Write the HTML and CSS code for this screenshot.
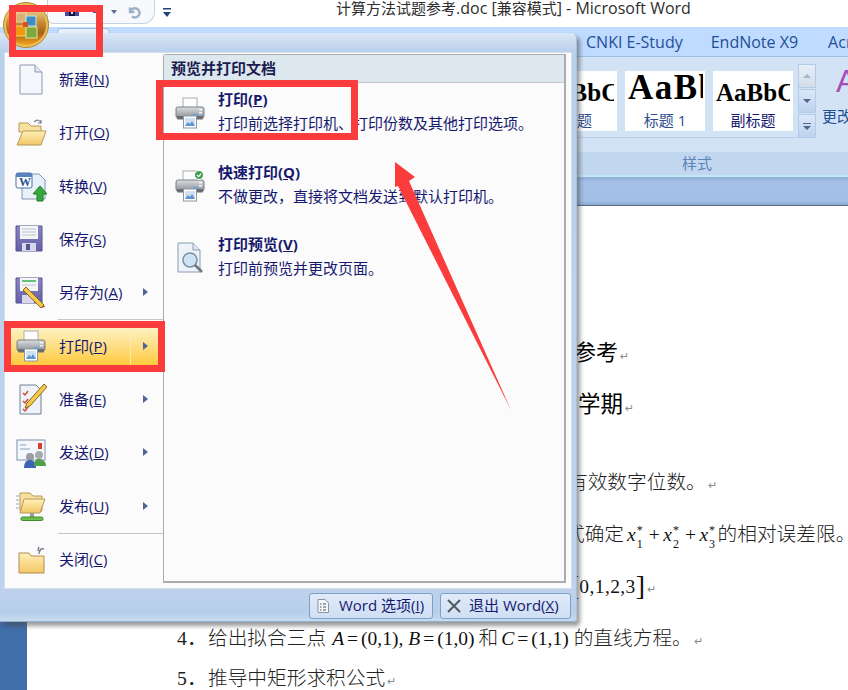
FILE: index.html
```html
<!DOCTYPE html>
<html lang="zh-CN">
<head>
    <meta charset="UTF-8">
    <meta name="viewport" content="width=device-width, initial-scale=1.0">
    <title>计算方法试题参考.doc - Microsoft Word</title>
    <link rel="stylesheet" href="styles.css">
</head>
<body>
    <svg class="defs" width="0" height="0">
        <defs>
            <linearGradient id="folder-g" x1="0" y1="0" x2="0" y2="1"><stop offset="0" stop-color="#fff0b8"/><stop offset="1" stop-color="#f3c766"/></linearGradient>
            <linearGradient id="floppy-g" x1="0" y1="0" x2="0" y2="1"><stop offset="0" stop-color="#8a86c4"/><stop offset="1" stop-color="#6460a8"/></linearGradient>
            <linearGradient id="body-g" x1="0" y1="0" x2="0" y2="1"><stop offset="0" stop-color="#dcdee0"/><stop offset="1" stop-color="#8b8f94"/></linearGradient>
            <linearGradient id="orb-g" x1="0" y1="0" x2="0" y2="1"><stop offset="0" stop-color="#f6e2a8"/><stop offset=".42" stop-color="#c98f38"/><stop offset=".7" stop-color="#a8601a"/><stop offset="1" stop-color="#f2a41c"/></linearGradient>
            <symbol id="i-printer" viewBox="0 0 32 32">
                <rect x="9" y="1" width="14" height="10" fill="#fdfdfd" stroke="#a9adb2"/>
                <rect x="2" y="10" width="28" height="11" rx="2" fill="url(#body-g)" stroke="#7b7f84"/>
                <rect x="3" y="19" width="26" height="3.5" rx="1" fill="#6a6e73"/>
                <rect x="25" y="12" width="3" height="1.5" fill="#f2f2f2"/>
                <rect x="25" y="15" width="3" height="1.5" fill="#f2f2f2"/>
                <rect x="19" y="17" width="5" height="1.5" fill="#58a7e8"/>
                <rect x="9.5" y="19" width="13" height="12" fill="#fff" stroke="#8e979f"/>
                <rect x="11" y="21" width="10" height="8" fill="#cfe2f4"/>
                <path d="M11 29l3-4 2 2 2-3 3 5z" fill="#5e95d0"/>
            </symbol>
        </defs>
    </svg>

    <div class="app">
        <header class="titlebar">
            <div class="qat">
                <svg class="qat-save" width="14" height="9" viewBox="0 0 14 9"><rect width="14" height="9" fill="#4b4aa8"/><rect x="4" y="3" width="6" height="6" fill="#16163a"/><rect x="6" y="4" width="2" height="3" fill="#dfe3f5"/></svg>
                <span class="qat-mark"></span>
                <span class="qat-drop"></span>
                <svg class="qat-undo" width="14" height="14" viewBox="0 0 14 14"><path d="M3 2.5v4.5h4.5M3.5 6.5a4.6 4.6 0 1 1 1.4 4.8" fill="none" stroke="#9db0c8" stroke-width="2.4"/></svg>
            </div>
            <svg class="qat-custom" width="8" height="12" viewBox="0 0 8 12"><rect y="1" width="8" height="1.5" fill="#26427a"/><path d="M0 5h8l-4 5z" fill="#26427a"/></svg>
            <h1 class="doc-title"><span class="cjk">计算方法试题参考</span>.doc [<span class="cjk">兼容模式</span>] - Microsoft Word</h1>
        </header>

        <nav class="tabs">
            <span class="home-tab"></span>
            <span class="tab">CNKI E-Study</span>
            <span class="tab">EndNote X9</span>
            <span class="tab tab-cut">Acr</span>
        </nav>

        <section class="ribbon">
            <div class="styles-group">
                <div class="gallery">
                    <div class="style-cell">
                        <span class="sample sample-sub">AaBbC</span>
                        <span class="cell-name">标题</span>
                    </div>
                    <div class="style-cell">
                        <span class="sample sample-h1">AaBb</span>
                        <span class="cell-name">标题 1</span>
                    </div>
                    <div class="style-cell">
                        <span class="sample sample-sub">AaBbC</span>
                        <span class="cell-name cell-name-dark">副标题</span>
                    </div>
                </div>
                <div class="scroller">
                    <span class="scroll-btn scroll-up"><i class="tri-up"></i></span>
                    <span class="scroll-btn"><i class="tri-down"></i></span>
                    <span class="scroll-btn"><i class="bar"></i><i class="tri-down"></i></span>
                </div>
                <div class="change-styles">
                    <span class="big-a">A</span>
                    <span class="change-label">更改</span>
                </div>
            </div>
            <div class="group-label">样式</div>
        </section>

        <div class="ruler-band"></div>

        <main class="workspace">
            <div class="page">
                <p class="line head-a">参考<span class="mark">↵</span></p>
                <p class="line head-b">学期<span class="mark">↵</span></p>
                <p class="line q1">有效数字位数。<span class="mark">↵</span></p>
                <p class="line q2">式确定<span class="math gap-x"><i>x</i><span class="ss"><sup>*</sup><sub>1</sub></span><span class="plus">+</span><i>x</i><span class="ss"><sup>*</sup><sub>2</sub></span><span class="plus">+</span><i>x</i><span class="ss"><sup>*</sup><sub>3</sub></span></span>的相对误差限。</p>
                <p class="line q3"><span class="math digits"><span class="bracket">[</span>0,1,2,3<span class="bracket">]</span></span><span class="mark">↵</span></p>
                <p class="line q4"><span class="num">4．</span>给出拟合三点<span class="math gap-l"><i>A</i><span class="eq">=</span>(0,1),<i class="after-comma">B</i><span class="eq">=</span>(1,0)</span><span class="gap-he">和</span><span class="math gap-c"><i>C</i><span class="eq">=</span>(1,1)</span><span class="gap-de">的直线方程。</span><span class="mark">↵</span></p>
                <p class="line q5"><span class="num">5．</span>推导中矩形求积公式<span class="mark">↵</span></p>
            </div>
        </main>

        <!-- office menu, sits over the ribbon and the page -->
        <div class="office-menu">
            <div class="menu-body">
                <ul class="menu-list">
                    <li class="menu-item">
                        <svg class="ic" viewBox="0 0 32 32"><path d="M5 1h15l7 7v22H5z" fill="#f4f7fb" stroke="#8d9cb2"/><path d="M20 1v7h7" fill="#dfe7f1" stroke="#8d9cb2"/></svg>
                        <span>新建(<u>N</u>)</span>
                    </li>
                    <li class="menu-item">
                        <svg class="ic" viewBox="0 0 32 32"><path d="M4 6h9l3 3h10v6H4z" fill="#f7dfa0" stroke="#b8995a"/><path d="M8 14h23l-5 14H2z" fill="url(#folder-g)" stroke="#b8995a"/><path d="M19 5c3-3 6-2 7 1M26 3v3h-3" fill="none" stroke="#7a828c" stroke-width="1.2"/></svg>
                        <span>打开(<u>O</u>)</span>
                    </li>
                    <li class="menu-item">
                        <svg class="ic" viewBox="0 0 32 32"><path d="M7 4h17l6 6v19H7z" fill="#e8f0f9" stroke="#7f96b4"/><rect x="1" y="3" width="16" height="15" rx="2" fill="#fff" stroke="#4a6fa8"/><rect x="1" y="3" width="16" height="4" fill="#5b80bd"/><text class="ic-w" x="4" y="16">W</text><path d="M25 16l7 8h-4v7h-6v-7h-4z" fill="#38a83a" stroke="#1f7a26"/></svg>
                        <span>转换(<u>V</u>)</span>
                    </li>
                    <li class="menu-item">
                        <svg class="ic" viewBox="0 0 32 32"><path d="M1 3h26v25H1z" fill="url(#floppy-g)" stroke="#55528f"/><rect x="5" y="3" width="18" height="13" fill="#f4f5f8"/><path d="M7 6h14M7 9h14M7 12h14" stroke="#c0c3cc"/><rect x="7" y="20" width="14" height="8" fill="#d8d8ea"/><rect x="11" y="21" width="4" height="6" fill="#55528f"/></svg>
                        <span>保存(<u>S</u>)</span>
                    </li>
                    <li class="menu-item item-sep has-sub">
                        <svg class="ic" viewBox="0 0 32 32"><path d="M1 1h26v25H1z" fill="url(#floppy-g)" stroke="#55528f"/><rect x="5" y="1" width="18" height="13" fill="#f4f5f8"/><path d="M7 4h14" stroke="#36b04a" stroke-width="1.5"/><path d="M7 8h14" stroke="#c0c3cc"/><rect x="7" y="18" width="12" height="8" fill="#d8d8ea"/><path d="M11 10l18 18-3 3L8 13z" fill="#f5c84a" stroke="#8a6a22"/><path d="M26 31l3-3 1 2z" fill="#c04a3a"/></svg>
                        <span>另存为(<u>A</u>)</span>
                        <i class="sub-arrow"></i>
                    </li>
                    <li class="menu-item is-active has-sub">
                        <svg class="ic" viewBox="0 0 32 32"><use href="#i-printer"/></svg>
                        <span>打印(<u>P</u>)</span>
                        <i class="sub-arrow"></i>
                    </li>
                    <li class="menu-item has-sub">
                        <svg class="ic" viewBox="0 0 32 32"><path d="M5 2h16l5 5v24H5z" fill="#eef3f9" stroke="#6f8197"/><path d="M8 10l2 2 3-4M8 18l2 2 3-4M8 26l2 2 3-4" fill="none" stroke="#d0473a" stroke-width="1.4"/><path d="M29 1l3 3-17 19-5 2 2-5z" fill="#f5c84a" stroke="#8a6a22"/></svg>
                        <span>准备(<u>E</u>)</span>
                        <i class="sub-arrow"></i>
                    </li>
                    <li class="menu-item has-sub">
                        <svg class="ic" viewBox="0 0 32 32"><rect x="2" y="3" width="28" height="20" fill="#f4f7fb" stroke="#7f92aa"/><rect x="23" y="6" width="4" height="6" fill="#d8402c"/><path d="M5 8h6M5 12h10" stroke="#8aa0bc"/><circle cx="15" cy="20" r="4" fill="#9a9c9f"/><path d="M9 31c0-6 3-8 6-8s6 2 6 8z" fill="#3c64b4"/><circle cx="24" cy="18" r="4" fill="#a8aaac"/><path d="M19 29c0-5 2-7 5-7s7 2 7 7z" fill="#4fa04a"/></svg>
                        <span>发送(<u>D</u>)</span>
                        <i class="sub-arrow"></i>
                    </li>
                    <li class="menu-item item-sep has-sub">
                        <svg class="ic" viewBox="0 0 32 32"><path d="M5 3h10l3 3h9v15H5z" fill="#f7dfa0" stroke="#b8995a"/><path d="M9 9h21l-5 14H5z" fill="url(#folder-g)" stroke="#b8995a"/><path d="M1 6h3M1 10h3M1 14h3M1 18h3" stroke="#9aa6b6"/><rect x="15" y="23" width="4" height="5" fill="#9a9c9f"/><rect x="6" y="27" width="22" height="3.5" rx="1.5" fill="#6cc04a" stroke="#3f8a2c"/></svg>
                        <span>发布(<u>U</u>)</span>
                        <i class="sub-arrow"></i>
                    </li>
                    <li class="menu-item">
                        <svg class="ic" viewBox="0 0 32 32"><path d="M4 10h10l2 3h13v17H4z" fill="url(#folder-g)" stroke="#b08c50"/><path d="M24 11c0-4 2-6 5-5M24 4l-1 3 3 1" fill="none" stroke="#6f7a86" stroke-width="1.3"/></svg>
                        <span>关闭(<u>C</u>)</span>
                    </li>
                </ul>

                <div class="print-panel">
                    <h2 class="panel-head">预览并打印文档</h2>
                    <div class="panel-rows">
                        <div class="panel-row">
                            <svg class="ic" viewBox="0 0 32 32"><use href="#i-printer"/></svg>
                            <div class="row-text">
                                <div class="row-title">打印(<u>P</u>)</div>
                                <div class="row-desc">打印前选择打印机、打印份数及其他打印选项。</div>
                            </div>
                        </div>
                        <div class="panel-row">
                            <svg class="ic" viewBox="0 0 32 32"><use href="#i-printer"/><circle cx="25" cy="5" r="4.5" fill="#3f9f4e" stroke="#fff"/><path d="M23 5l1.6 1.7 2.6-3" fill="none" stroke="#fff" stroke-width="1.2"/></svg>
                            <div class="row-text">
                                <div class="row-title">快速打印(<u>Q</u>)</div>
                                <div class="row-desc">不做更改，直接将文档发送到默认打印机。</div>
                            </div>
                        </div>
                        <div class="panel-row">
                            <svg class="ic" viewBox="0 0 32 32"><path d="M4 1h15l7 7v22H4z" fill="#eef3fa" stroke="#8d9cb2"/><path d="M19 1v7h7" fill="#dfe7f1" stroke="#8d9cb2"/><circle cx="16" cy="18" r="7" fill="#cfe3f6" stroke="#7f8f9e" stroke-width="1.6"/><path d="M21 23l7 7" stroke="#6f767d" stroke-width="2.6"/></svg>
                            <div class="row-text">
                                <div class="row-title">打印预览(<u>V</u>)</div>
                                <div class="row-desc">打印前预览并更改页面。</div>
                            </div>
                        </div>
                    </div>
                </div>
            </div>

            <div class="menu-foot">
                <button class="foot-btn btn-options">
                    <svg width="12" height="14" viewBox="0 0 12 14"><path d="M1 .5h7l3.5 3.5v9.5H1z" fill="#f6f7f8" stroke="#8b95a1"/><path d="M3 5h1.5M3 8h1.5M3 11h1.5M6 5h3M6 8h3M6 11h3" stroke="#45505c"/></svg>
                    <span>Word 选项(<u>I</u>)</span>
                </button>
                <button class="foot-btn btn-exit">
                    <svg width="14" height="14" viewBox="0 0 14 14"><path d="M1 1l12 12M13 1L1 13" stroke="#55595f" stroke-width="2"/></svg>
                    <span>退出 Word(<u>X</u>)</span>
                </button>
            </div>
        </div>

        <!-- office button, overlaps the title bar and the menu top -->
        <svg class="orb" width="46" height="46" viewBox="0 0 46 46">
            <circle cx="23" cy="23" r="22.5" fill="#e8bf58" stroke="#b3872c"/>
            <circle cx="23" cy="23" r="20" fill="url(#orb-g)"/>
            <rect x="13" y="11" width="10" height="9" fill="#dcb070" stroke="#eccf9c"/>
            <rect x="23" y="14" width="10" height="10" fill="#3b8fc0" stroke="#c8e4f4"/>
            <rect x="12" y="24" width="11" height="10" fill="#f09a14" stroke="#ffd070"/>
            <rect x="23" y="25" width="11" height="11" fill="#7ea83c" stroke="#d4e6a0"/>
            <rect x="20" y="20" width="5" height="5" fill="#d8502a"/>
        </svg>

        <!-- hand drawn red marks on the screenshot -->
        <div class="mark-box mark-orb"></div>
        <div class="mark-box mark-print"></div>
        <div class="mark-box mark-item"></div>
        <svg class="mark-arrow" width="130" height="260" viewBox="0 0 130 260">
            <path d="M5 2L25 17L19 21L121 250L8 26L5 27z" fill="#fb3c3c"/>
        </svg>
    </div>
</body>
</html>
```

FILE: styles.css
```css
* {
    margin: 0;
    padding: 0;
    box-sizing: border-box;
}

body {
    font-family: "Open Sans", "Noto Sans CJK SC", sans-serif;
    background: #fff;
    overflow: hidden;
}

.defs {
    position: absolute;
}

.app {
    position: relative;
    width: 848px;
    height: 690px;
    overflow: hidden;
    display: flex;
    flex-direction: column;
}

/* title bar */
.titlebar {
    height: 27px;
    flex: none;
    background: #fff;
    display: flex;
    align-items: flex-start;
    position: relative;
}

.qat {
    width: 108px;
    height: 24px;
    margin-left: 47px;
    border: 1px solid #c3d3e6;
    border-top: none;
    border-radius: 0 0 12px 6px;
    background: #f7f9fc;
    display: flex;
    align-items: center;
    padding-left: 17px;
}

.qat-mark {
    width: 5px;
    height: 2px;
    margin-left: 14px;
    background: #3a5aa8;
}

.qat-drop {
    width: 0;
    height: 0;
    margin-left: 13px;
    border: 3px solid transparent;
    border-top: 4px solid #5a6f90;
    border-bottom: none;
}

.qat-undo {
    margin-left: 10px;
}

.qat-custom {
    margin: 7px 0 0 8px;
}

.doc-title {
    position: absolute;
    left: 336px;
    top: 0;
    font-size: 16px;
    font-weight: 400;
    line-height: 17px;
    color: #2e2e2e;
    white-space: nowrap;
}

.cjk {
    font-size: 15px;
}

/* tabs */
.tabs {
    height: 29px;
    flex: none;
    background: #bfdbff;
    display: flex;
    align-items: center;
    font-size: 16px;
    color: #1f4f97;
    overflow: hidden;
    padding-left: 586px;
    position: relative;
}

.tab {
    margin-right: 28px;
    white-space: nowrap;
}

.tab-cut {
    margin-left: 2px;
    margin-right: 0;
}

.home-tab {
    position: absolute;
    left: 57px;
    top: 1px;
    width: 53px;
    height: 10px;
    background: #e6f0fb;
    border: 1px solid #9fbde0;
    border-radius: 4px 4px 0 0;
}

/* ribbon */
.ribbon {
    height: 121px;
    flex: none;
    background: #d3e3f6;
    border-top: 1px solid #9fc0e6;
    border-bottom: 2px solid #bfe8f4;
    display: flex;
    flex-direction: column;
}

.styles-group {
    height: 95px;
    flex: none;
    display: flex;
    align-items: flex-start;
    padding-left: 537px;
    padding-top: 7px;
    overflow: hidden;
}

.gallery {
    width: 261px;
    height: 74px;
    flex: none;
    display: flex;
    gap: 8px;
    padding-top: 7px;
    border-bottom: 1px solid #b8cfe9;
}

.style-cell {
    width: 80px;
    height: 60px;
    flex: none;
    background: #fff;
    display: flex;
    flex-direction: column;
    overflow: hidden;
}

.sample {
    height: 38px;
    padding-left: 3px;
    font-family: "Liberation Serif", serif;
    font-weight: 700;
    color: #000;
    white-space: nowrap;
    overflow: hidden;
}

.sample-h1 {
    width: 78px;
    font-size: 35px;
    line-height: 34px;
    letter-spacing: 1.5px;
}

.sample-sub {
    width: 77px;
    font-size: 25px;
    line-height: 44px;
}

.cell-name {
    font-size: 15px;
    line-height: 22px;
    color: #2c4f8f;
    text-align: center;
}

.cell-name-dark {
    color: #14186e;
}

.scroller {
    width: 18px;
    height: 74px;
    flex: none;
    display: flex;
    flex-direction: column;
    gap: 1px;
}

.scroll-btn {
    flex: 1;
    background: linear-gradient(#dbe8f8, #bcd3ee);
    border: 1px solid #b3cbe6;
    display: flex;
    flex-direction: column;
    align-items: center;
    justify-content: center;
    gap: 2px;
}

.scroll-up {
    background: linear-gradient(#e6eef8, #d3deea);
}

.tri-up {
    border: 4px solid transparent;
    border-bottom: 4px solid #a9b6c6;
    border-top: none;
}

.tri-down {
    border: 4px solid transparent;
    border-top: 4px solid #50688e;
    border-bottom: none;
}

.bar {
    width: 8px;
    height: 1px;
    background: #50688e;
}

.change-styles {
    width: 40px;
    flex: none;
    margin-left: 6px;
    display: flex;
    flex-direction: column;
    color: #1f4f97;
    white-space: nowrap;
}

.big-a {
    font-family: "Liberation Sans", sans-serif;
    font-size: 32px;
    line-height: 34px;
    margin-left: 14px;
    color: #a64cb8;
}

.change-label {
    font-size: 15px;
    line-height: 20px;
    margin-top: 8px;
}

.group-label {
    flex: 1;
    background: #c1d6ef;
    font-size: 15px;
    color: #5c83b8;
    line-height: 22px;
    padding-left: 682px;
}

.ruler-band {
    height: 29px;
    flex: none;
    background: linear-gradient(#8fadd6, #a4c0e7 5px, #a2bfe6 24px, #8aa8d0);
    border-bottom: 1px solid #5a6b84;
}

/* document */
.workspace {
    flex: 1;
    background: linear-gradient(90deg, #3f6ea9, #6a93c7);
    min-height: 0;
}

.page {
    margin-left: 27px;
    height: 100%;
    background: #fff;
    padding-top: 119px;
    color: #222;
    font-family: "Noto Sans CJK SC", sans-serif;
    font-size: 19.7px;
    font-weight: 300;
}

.line {
    height: 52px;
    line-height: 52px;
    white-space: nowrap;
}

.head-a {
    margin-left: 547px;
    font-size: 22px;
    font-weight: 400;
    line-height: 50px;
    color: #000;
}

.head-b {
    margin-left: 551px;
    font-size: 22.5px;
    font-weight: 400;
    line-height: 50px;
    color: #000;
}

.q1 {
    margin-top: 26px;
    margin-left: 541px;
}

.q2 {
    margin-left: 538px;
}

.q3 {
    margin-left: 543px;
}

.q4,
.q5 {
    margin-left: 150px;
}

.q5 {
    height: 28px;
    line-height: 28px;
}

.num {
    display: inline-block;
    width: 31px;
    font-family: "Liberation Serif", serif;
    font-weight: 400;
}

.mark {
    font-family: "DejaVu Sans", sans-serif;
    font-size: 11px;
    color: #8a8a8a;
    margin-left: 2px;
}

.math {
    font-family: "Liberation Serif", serif;
    font-size: 19.5px;
    font-weight: 400;
    color: #111;
}

.gap-l {
    margin-left: 6px;
}

.gap-x {
    margin-left: 3px;
}

.gap-he {
    margin-left: 4px;
}

.gap-c {
    margin-left: 3px;
}

.gap-de {
    margin-left: 5px;
}

.eq {
    margin: 0 3px;
}

.after-comma {
    margin-left: 5px;
}

.plus {
    margin: 0 3.5px;
}

.digits {
    letter-spacing: 0.4px;
}

.ss {
    display: inline-flex;
    flex-direction: column;
    vertical-align: middle;
    width: 8.5px;
    margin-left: 1px;
    font-size: 12px;
    line-height: 14px;
}

.ss sup,
.ss sub {
    font-size: 12px;
    vertical-align: baseline;
    line-height: 14px;
}

.bracket {
    font-size: 28px;
    font-weight: 400;
    line-height: 30px;
    vertical-align: -2px;
    letter-spacing: 0;
}

/* office menu */
.office-menu {
    position: absolute;
    left: 0;
    top: 33px;
    width: 577px;
    height: 589px;
    padding-top: 19px;
    background: linear-gradient(#dbe7f6 0, #b9d0eb 19px, #bdd2ed 555px, #b7cee9 580px, #c9dcf0 100%);
    border-radius: 0 5px 4px 0;
    border-right: 1px solid #aac1dc;
    border-bottom: 1px solid #8fb0cf;
    box-shadow: 3px 4px 4px rgba(70, 70, 70, 0.55);
    display: flex;
    flex-direction: column;
    font-size: 15px;
    color: #16186e;
}

.menu-body {
    height: 537px;
    flex: none;
    margin: 0 4px 0 4px;
    background: #fbfbfb;
    border: 1px solid #d5e0ec;
    display: flex;
}

.menu-list {
    width: 158px;
    flex: none;
    list-style: none;
    padding-top: 8px;
    display: flex;
    flex-direction: column;
    gap: 16.33px;
}

.menu-item {
    height: 37px;
    flex: none;
    position: relative;
    display: flex;
    align-items: center;
    gap: 12px;
    padding-left: 10px;
    white-space: nowrap;
}

.menu-item span {
    margin-top: -2px;
}

.ic {
    width: 32px;
    height: 32px;
    flex: none;
}

.ic-w {
    font-family: "Liberation Serif", serif;
    font-size: 12px;
    font-weight: 700;
    fill: #2a4f94;
}

.item-sep::after {
    content: "";
    position: absolute;
    left: 53px;
    right: 0;
    bottom: -9px;
    height: 1px;
    background: #c6c6c6;
}

.sub-arrow {
    position: absolute;
    left: 138px;
    top: 14px;
    border: 4px solid transparent;
    border-left: 5px solid #52629a;
    border-right: none;
}

.is-active {
    width: 153px;
    background: linear-gradient(#fdf1c2, #fee08a 45%, #ffc93d);
}

.is-active::before {
    content: "";
    position: absolute;
    left: 125px;
    top: 0;
    bottom: 0;
    width: 1px;
    background: #fbe9b0;
}

.print-panel {
    flex: 1;
    margin: 1px 5px 5px 0;
    background: #fbfbfb;
    border: 1px solid #a9abad;
    border-right-width: 2px;
    border-bottom-width: 2px;
    border-radius: 3px 0 0 0;
}

.panel-head {
    height: 28px;
    background: #dde7ee;
    border-bottom: 1px solid #c4c7ca;
    font-size: 15px;
    font-weight: 700;
    line-height: 27px;
    padding-left: 7px;
    color: #1a1c50;
}

.panel-rows {
    display: flex;
    flex-direction: column;
    gap: 12.5px;
}

.panel-row {
    height: 60px;
    flex: none;
    display: flex;
    align-items: center;
    gap: 12px;
    padding-left: 10px;
}

.row-text {
    margin-top: -4px;
}

.row-title {
    font-weight: 700;
    line-height: 24px;
    color: #16186e;
}

.row-desc {
    line-height: 24px;
    white-space: nowrap;
}

.menu-foot {
    flex: 1;
    display: flex;
    justify-content: flex-end;
    gap: 7px;
    padding: 4px 5px 0 0;
}

.foot-btn {
    height: 26px;
    display: flex;
    align-items: center;
    font: inherit;
    color: inherit;
    white-space: nowrap;
    background: linear-gradient(#dfeafa, #cfdff3);
    border: 1px solid #7f9fc4;
    border-radius: 3px;
}

.foot-btn span {
    margin-top: -4px;
}

.btn-options {
    width: 124px;
    padding-left: 7px;
    gap: 10px;
}

.btn-exit {
    width: 131px;
    padding-left: 6px;
    gap: 8px;
}

/* office orb */
.orb {
    position: absolute;
    left: 3px;
    top: 2px;
}

/* red marks */
.mark-box {
    position: absolute;
    border: 7px solid #fb3c3c;
}

.mark-orb {
    left: 9px;
    top: 5px;
    width: 94px;
    height: 52px;
}

.mark-print {
    left: 156px;
    top: 80px;
    width: 202px;
    height: 60px;
}

.mark-item {
    left: 4px;
    top: 321px;
    width: 161px;
    height: 51px;
}

.mark-arrow {
    position: absolute;
    left: 390px;
    top: 160px;
}
```
